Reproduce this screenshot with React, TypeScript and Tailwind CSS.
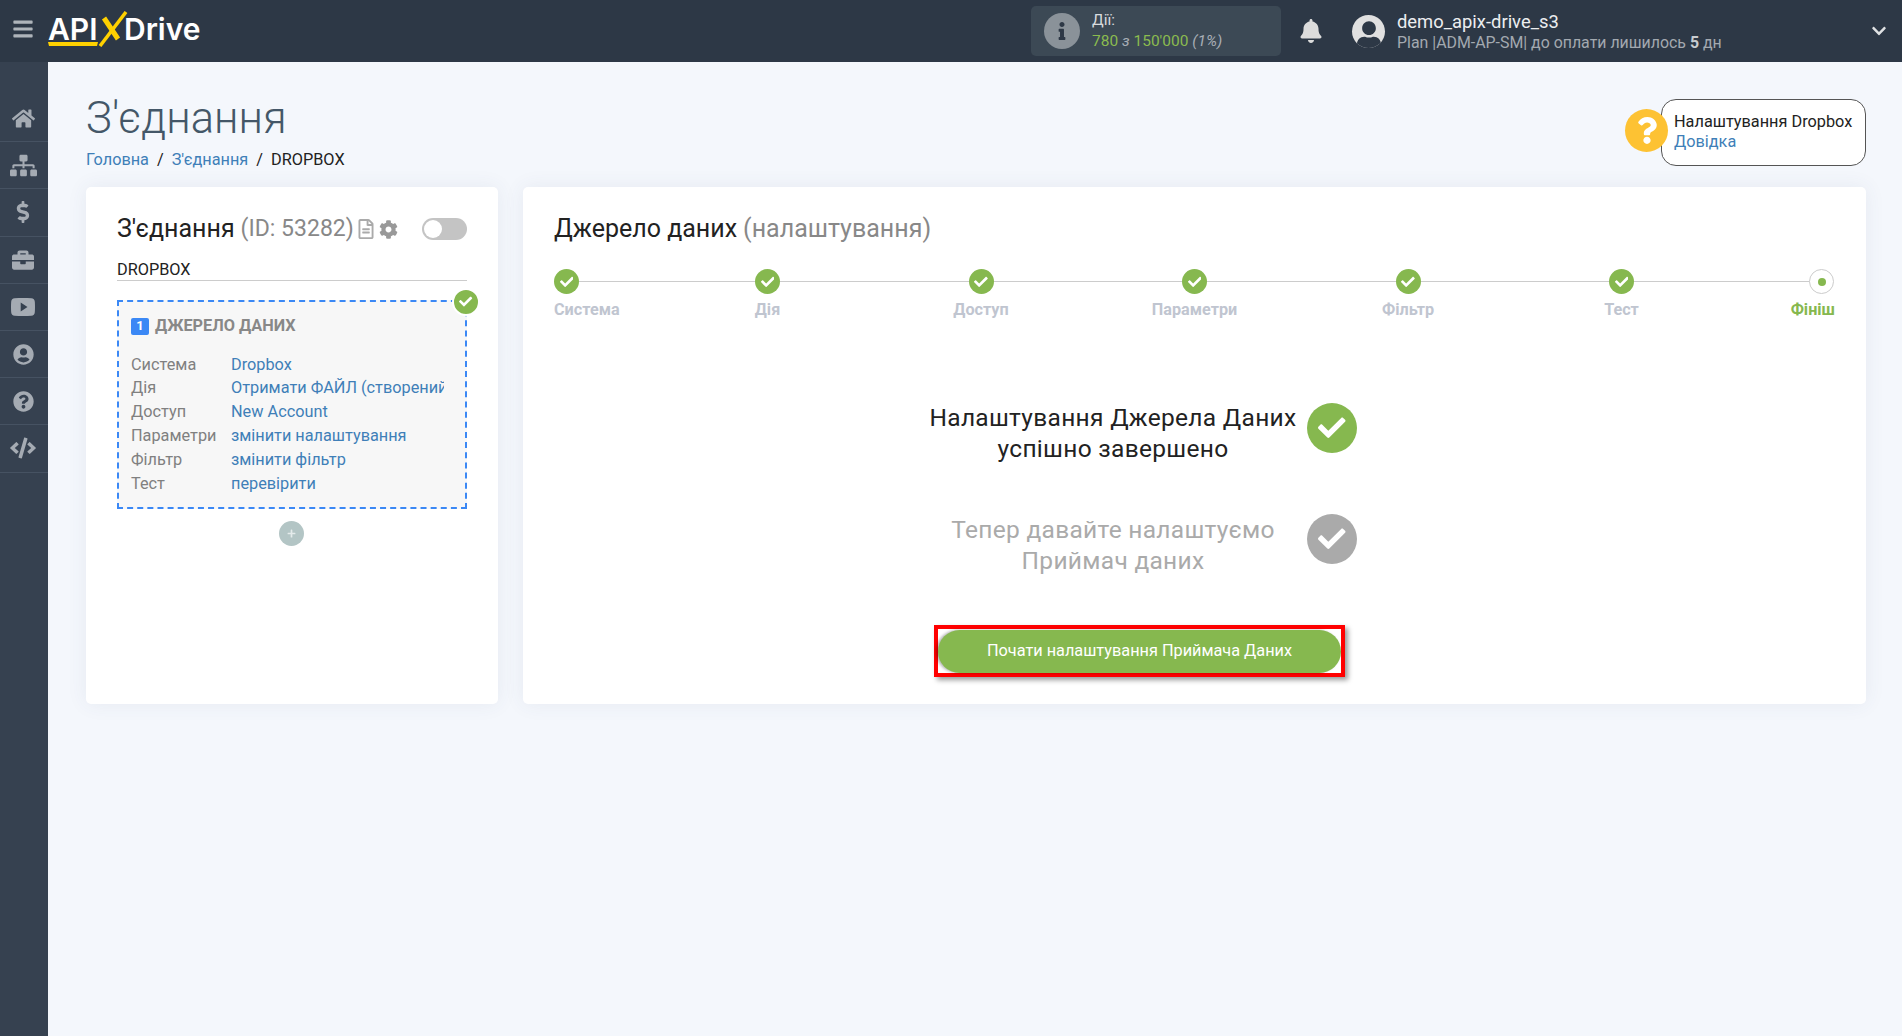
import { FaBars, FaBell, FaBriefcase, FaCheck, FaChevronDown, FaCode, FaCog, FaDollarSign, FaHome, FaInfo, FaPlus, FaQuestion, FaQuestionCircle, FaRegFileAlt, FaSitemap, FaUser, FaUserCircle } from 'react-icons/fa';
import { IoLogoYoutube } from 'react-icons/io';

const sideItems = [
  { icon: <FaHome className="w-[23px] h-[23px]" /> },
  { icon: <FaSitemap className="w-[27px] h-[27px]" /> },
  { icon: <FaDollarSign className="w-[22px] h-[22px]" /> },
  { icon: <FaBriefcase className="w-[22px] h-[22px]" /> },
  { icon: <IoLogoYoutube className="w-[24px] h-[24px]" /> },
  { icon: <FaUserCircle className="w-[21px] h-[21px]" /> },
  { icon: <FaQuestionCircle className="w-[21px] h-[21px]" /> },
  { icon: <FaCode className="w-[26px] h-[26px]" /> },
];

const details = [
  ['Система', 'Dropbox'],
  ['Дія', 'Отримати ФАЙЛ (створений)'],
  ['Доступ', 'New Account'],
  ['Параметри', 'змінити налаштування'],
  ['Фільтр', 'змінити фільтр'],
  ['Тест', 'перевірити'],
];

const steps = ['Система', 'Дія', 'Доступ', 'Параметри', 'Фільтр', 'Тест'];

function Logo() {
  return (
    <div className="relative w-[152px] h-[36px] ml-[15px] mb-[4px] font-['Inter',sans-serif] font-semibold text-[30px] leading-none text-white">
      <span className="absolute left-0 top-[3px]">API</span>
      <span className="absolute left-[76px] top-[3px]">Drive</span>
      <svg className="absolute left-0 top-0" width="152" height="36" viewBox="0 0 152 36">
        <path d="M0 31 H50 L49 35 H1 Z" fill="#ffd100" />
        <line x1="52" y1="35" x2="78" y2="1" stroke="#ffd100" strokeWidth="3.5" />
        <line x1="56" y1="7" x2="70" y2="28" stroke="#ffd100" strokeWidth="5" />
      </svg>
    </div>
  );
}

function Header() {
  return (
    <header className="h-[62px] bg-[#2d3846] flex items-center shrink-0">
      <FaBars className="w-[20px] h-[22px] ml-[13px] mb-[4px] text-[#aeb4ba]" />
      <Logo />
      <div className="ml-[831px] w-[250px] h-[50px] rounded-[5px] bg-[#3c4955] flex items-center pl-[13px]">
        <div className="w-[36px] h-[36px] rounded-full bg-[#8a9299] flex items-center justify-center">
          <FaInfo className="w-[18px] h-[18px] text-[#2d3846]" />
        </div>
        <div className="ml-[12px] text-[15.5px] leading-[21px]">
          <div className="text-[#d8dbde]">Дії:</div>
          <div className="text-[#8bbb4f]">
            780 <i className="text-[#a8aeb5]">з</i> 150'000 <i className="text-[#a8aeb5]">(1%)</i>
          </div>
        </div>
      </div>
      <FaBell className="w-[22px] h-[24px] ml-[19px] text-[#dcdcdc]" />
      <div className="relative ml-[30px] w-[33px] h-[33px] rounded-full bg-[#e0e0e0] overflow-hidden flex justify-center">
        <FaUser className="w-[24px] h-[28px] mt-[6px] text-[#2d3846]" />
      </div>
      <div className="ml-[12px] mt-[2px] leading-none">
        <div className="text-[18.4px] text-[#eceef0]">demo_apix-drive_s3</div>
        <div className="mt-[3px] text-[15.9px] text-[#a3a9b0]">
          Plan |ADM-AP-SM| до оплати лишилось <b className="text-[#c8ccd0]">5</b> дн
        </div>
      </div>
      <FaChevronDown className="w-[16px] h-[16px] ml-auto mr-[15px] text-[#dfe1e3]" />
    </header>
  );
}

function Sidebar() {
  return (
    <aside className="w-[48px] shrink-0 bg-[#364150] pt-[33px]">
      {sideItems.map((item, i) => (
        <div key={i} className="h-[47.2px] flex items-center justify-center pr-[2px] border-b border-[#465262] text-[#a5abb3]">
          {item.icon}
        </div>
      ))}
    </aside>
  );
}

function Badge({ className }: { className: string }) {
  return (
    <div className={`rounded-full flex items-center justify-center text-white ${className}`}>
      <FaCheck className="w-[55%] h-[55%]" />
    </div>
  );
}

function ConnectionCard() {
  return (
    <section className="w-[412px] h-[517px] bg-white rounded-[5px] shadow-[0_0_20px_rgba(60,80,120,0.08)] px-[31px] pt-[26px]">
      <div className="flex items-center h-[32px]">
        <span className="text-[25px] text-[#222]">З'єднання</span>
        <span className="text-[23px] text-[#888] ml-[6px]">(ID: 53282)</span>
        <FaRegFileAlt className="w-[16px] h-[20px] ml-[4px] text-[#aaa]" />
        <FaCog className="w-[19px] h-[19px] ml-[5px] text-[#999]" />
        <div className="ml-auto w-[45px] h-[22px] rounded-full bg-[#c4c4c4] p-[2px]">
          <div className="w-[18px] h-[18px] rounded-full bg-white" />
        </div>
      </div>
      <div className="mt-[14px] h-[22px] border-b border-[#ccc] text-[16.3px] leading-[22px] text-[#222]">DROPBOX</div>
      <div className="relative mt-[19px] h-[209px] border-2 border-dashed border-[#3b88f5] bg-[#f7f7f7] pl-[12px] pr-[21px] pt-[14px]">
        <Badge className="absolute -right-[15px] -top-[14px] w-[28px] h-[28px] bg-[#86b84f] border-2 border-white" />
        <div className="flex items-center h-[20px]">
          <span className="w-[18px] h-[17px] rounded-[2px] bg-[#3b88f5] text-white text-[13px] font-bold flex items-center justify-center">1</span>
          <span className="ml-[6px] text-[16.3px] font-bold text-[#888]">ДЖЕРЕЛО ДАНИХ</span>
        </div>
        <div className="mt-[17px]">
          {details.map(([label, value]) => (
            <div key={label} className="flex h-[23.8px] items-center text-[16.3px]">
              <span className="w-[100px] shrink-0 text-[#808080]">{label}</span>
              <span className="text-[#3f7fb8] whitespace-nowrap overflow-hidden">{value}</span>
            </div>
          ))}
        </div>
      </div>
      <div className="mt-[12px] mr-[2px] flex justify-center">
        <div className="w-[25px] h-[25px] rounded-full bg-[#b3c5c5] flex items-center justify-center">
          <FaPlus className="w-[9px] h-[9px] text-[#e4ebeb]" />
        </div>
      </div>
    </section>
  );
}

function Stepper() {
  return (
    <div className="relative mt-[24px] flex justify-between h-[50px]">
      <div className="absolute left-0 right-[2px] top-[12px] h-[1px] bg-[#ccc]" />
      {steps.map((step, i) => (
        <div key={step} className={`relative w-0 flex flex-col ${i === 0 ? 'items-start' : 'items-center'}`}>
          <Badge className="w-[25px] h-[25px] shrink-0 bg-[#86b84f]" />
          <span className="mt-[5px] text-[16.2px] leading-[22px] font-bold text-[#c0c5d0] whitespace-nowrap">{step}</span>
        </div>
      ))}
      <div className="relative w-0 flex flex-col items-end">
        <div className="mr-[1px] w-[25px] h-[25px] shrink-0 rounded-full bg-white border border-[#ccc] flex items-center justify-center">
          <div className="w-[8px] h-[8px] rounded-full bg-[#86b84f]" />
        </div>
        <span className="mt-[5px] text-[16.2px] leading-[22px] font-bold text-[#86b84f] whitespace-nowrap">Фініш</span>
      </div>
    </div>
  );
}

function SetupCard() {
  return (
    <section className="flex-1 h-[517px] bg-white rounded-[5px] shadow-[0_0_20px_rgba(60,80,120,0.08)] pl-[31px] pr-[31px] pt-[26px]">
      <div className="h-[32px] flex items-center text-[25px]">
        <span className="text-[#222]">Джерело даних</span>
        <span className="ml-[6px] text-[#888]">(налаштування)</span>
      </div>
      <Stepper />
      <div className="mt-[83px] flex flex-col items-center">
        <div className="ml-[-104px] flex items-start">
          <div className="w-[370px] text-center text-[24.5px] leading-[31px] tracking-[0.3px] text-[#222]">
            Налаштування Джерела Даних<br />успішно завершено
          </div>
          <Badge className="ml-[9px] mt-[1px] w-[50px] h-[50px] bg-[#86b84f]" />
        </div>
        <div className="ml-[-104px] mt-[50px] flex items-start">
          <div className="w-[370px] text-center text-[24.5px] leading-[31px] tracking-[0.3px] text-[#aaa]">
            Тепер давайте налаштуємо<br />Приймач даних
          </div>
          <Badge className="ml-[9px] w-[50px] h-[50px] bg-[#aaa]" />
        </div>
        <div className="ml-[-110px] mt-[49px] w-[411px] h-[52px] border-[4px] border-[#f00] shadow-[3px_3px_5px_rgba(0,0,0,0.4)] flex items-center justify-center">
          <button className="w-[403px] h-[43px] rounded-full bg-[#86b84f] text-white text-[16.3px] font-normal shadow-[-2px_0_3px_rgba(0,0,0,0.3)]">
            Почати налаштування Приймача Даних
          </button>
        </div>
      </div>
    </section>
  );
}

export default function App() {
  return (
    <div className="min-h-screen flex flex-col bg-[#f4f7fc] font-['Roboto',sans-serif]">
      <Header />
      <div className="flex-1 flex">
        <Sidebar />
        <main className="flex-1 pl-[38px] pr-[36px]">
          <div className="h-[125px] flex justify-between">
            <div>
              <h1 className="mt-[33px] text-[43.5px] leading-[48px] font-light text-[#445768]">З'єднання</h1>
              <div className="mt-[6px] text-[16.3px] leading-[22px] text-[#222]">
                <span className="text-[#3f7fb8]">Головна</span>
                <span className="mx-[8px]">/</span>
                <span className="text-[#3f7fb8]">З'єднання</span>
                <span className="mx-[8px]">/</span>
                DROPBOX
              </div>
            </div>
            <div className="mt-[37px] flex items-start">
              <div className="relative z-10 mt-[10px] -mr-[7px] w-[43px] h-[43px] rounded-full bg-[#fdc233] flex items-center justify-center">
                <FaQuestion className="w-[24px] h-[27px] text-white" />
              </div>
              <div className="w-[205px] h-[67px] rounded-[15px] border border-[#555] bg-white pl-[12px] pt-[12px] text-[16.3px] leading-[20px]">
                <div className="text-[#222]">Налаштування Dropbox</div>
                <div className="text-[#3f7fb8]">Довідка</div>
              </div>
            </div>
          </div>
          <div className="flex gap-[25px]">
            <ConnectionCard />
            <SetupCard />
          </div>
        </main>
      </div>
    </div>
  );
}
